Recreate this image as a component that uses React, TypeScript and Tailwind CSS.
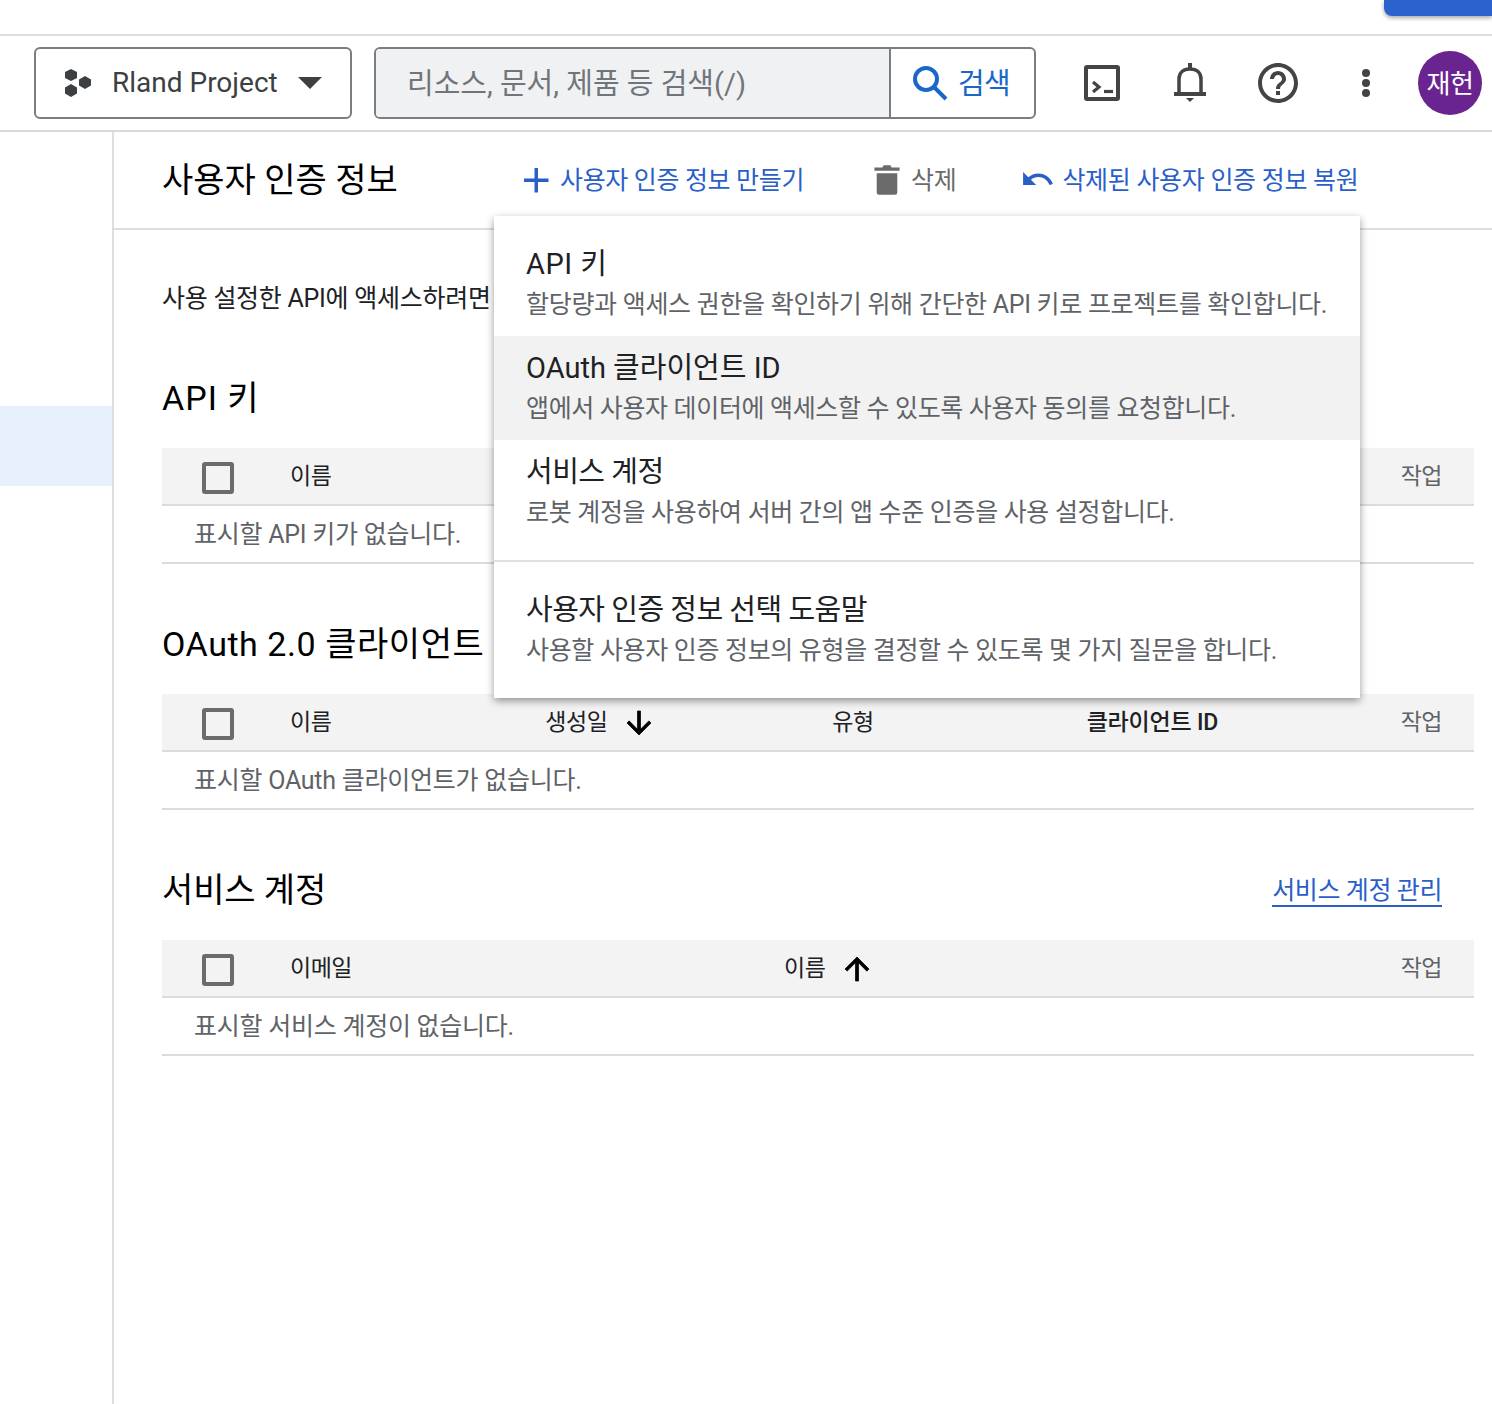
import React from 'react';

const font = { fontFamily: 'Roboto, "Noto Sans CJK KR", sans-serif' };

const Checkbox = () => (
  <div className="w-8 h-8 rounded-[3px] border-[4px] border-[#6b6b6b] shrink-0" />
);

const SortArrow = ({ up }: { up?: boolean }) => (
  <svg width="36" height="36" viewBox="0 0 24 24" className={up ? '' : 'rotate-180'}>
    <path d="M4 12l1.41 1.41L11 7.83V20h2V7.83l5.58 5.59L20 12l-8-8-8 8z" fill="#000" stroke="#000" strokeWidth="0.5" />
  </svg>
);

const menuItems = [
  { title: 'API 키', titleClass: 'tracking-[0.5px]', desc: '할당량과 액세스 권한을 확인하기 위해 간단한 API 키로 프로젝트를 확인합니다.', descClass: 'tracking-[-0.3px]' },
  { title: 'OAuth 클라이언트 ID', titleClass: 'tracking-[0px]', desc: '앱에서 사용자 데이터에 액세스할 수 있도록 사용자 동의를 요청합니다.', descClass: 'tracking-[-0.35px]', active: true },
  { title: '서비스 계정', titleClass: 'tracking-[-0.5px]', desc: '로봇 계정을 사용하여 서버 간의 앱 수준 인증을 사용 설정합니다.', descClass: 'tracking-[-0.33px]' },
];

const CreateMenu = () => (
  <div className="absolute left-[494px] top-[216px] w-[866px] h-[482px] bg-white shadow-[0_3px_8px_rgba(0,0,0,0.4)] z-10 pt-[16px]">
    {menuItems.map((m) => (
      <div key={m.title} className={`h-[104px] px-8 pt-[15px] ${m.active ? 'bg-[#f2f2f2]' : ''}`}>
        <div className={`text-[29px] leading-[34px] text-[#202124] ${m.titleClass}`}>{m.title}</div>
        <div className={`text-[25px] leading-[36px] mt-[6px] text-[#5f6368] whitespace-nowrap ${m.descClass}`}>{m.desc}</div>
      </div>
    ))}
    <div className="border-t-2 border-[#e0e0e0] mt-[16px] px-8 pt-[31px]">
      <div className="text-[29px] leading-[34px] text-[#202124] tracking-[-0.5px]">사용자 인증 정보 선택 도움말</div>
      <div className="text-[25px] leading-[36px] mt-[6px] text-[#5f6368] tracking-[-0.33px] whitespace-nowrap">사용할 사용자 인증 정보의 유형을 결정할 수 있도록 몇 가지 질문을 합니다.</div>
    </div>
  </div>
);

const Section = ({ title, titleClass, empty, columns, link, top }: { title: string; titleClass: string; empty: string; columns: React.ReactNode; link?: string; top: string }) => (
  <section className={top}>
    <div className="flex items-center justify-between h-[44px] pr-[32px]">
      <h2 className={`text-[34px] leading-[44px] text-[#000] ${titleClass}`}>{title}</h2>
      {link && <a className="mt-[4px] text-[25px] leading-[28px] text-[#2a5fc9] border-b-2 border-[#2a5fc9] tracking-[-0.4px]">{link}</a>}
    </div>
    <div className="mt-[28px] h-[58px] pt-[2px] bg-[#f3f3f3] border-b-2 border-[#dcdcdc] relative flex items-center text-[23px] text-[#202124] tracking-[-0.5px]">
      <div className="pl-[40px] w-[128px] shrink-0 pt-0.5"><Checkbox /></div>
      {columns}
      <span className="ml-auto pr-[32px] text-[#5f6368]">작업</span>
    </div>
    <div className="h-[58px] pt-[2px] border-b-2 border-[#dcdcdc] pl-[32px] flex items-center text-[25px] text-[#5f6368] tracking-[-0.25px]">{empty}</div>
  </section>
);

export default function App() {
  return (
    <div style={font} className="w-[1492px] h-[1404px] bg-white relative overflow-hidden">
      <div className="h-[36px] border-b-2 border-[#dedede] relative">
        <div className="absolute right-0 top-0 w-[108px] h-[16px] bg-[#2b62cc] rounded-bl-[8px] shadow-[0_2px_4px_rgba(0,0,0,0.35)]" />
      </div>

      <header className="h-[96px] border-b-2 border-[#d9d9de] flex items-center pl-[34px] pr-[10px]">
        <div className="w-[318px] h-[72px] rounded-[6px] border-2 border-[#7b7d82] flex items-center pl-[28px] pr-[28px]">
          <svg width="28" height="30" viewBox="0 0 28 30" fill="#3c4043" className="shrink-0">
            <path d="M7 1l6 3v6l-6 3-6-3V4z" />
            <path d="M21 8l6 3.5v6L21 21l-6-3.500v-6z" />
            <path d="M7 16l6 3.500v6L7 29l-6-3.500v-6z" />
          </svg>
          <span className="ml-[20px] text-[28px] text-[#3c4043] whitespace-nowrap">Rland Project</span>
          <svg width="24" height="12" viewBox="0 0 24 12" className="ml-auto"><path d="M0 0h24L12 12z" fill="#3c4043" /></svg>
        </div>

        <div className="ml-[22px] w-[662px] h-[72px] rounded-[6px] border-2 border-[#7b7d82] flex overflow-hidden">
          <div className="w-[515px] bg-[#f0f1f3] border-r-2 border-[#7b7d82] flex items-center pl-[31px] pt-1 text-[29px] text-[#70757a] whitespace-nowrap">
            리소스, 문서, 제품 등 검색(/)
          </div>
          <div className="flex-1 flex items-center pl-[20px] text-[#1a66c9] text-[29px]">
            <svg width="38" height="38" viewBox="0 0 38 38" fill="none" stroke="#1a66c9" strokeWidth="4" className="shrink-0">
              <circle cx="15" cy="15" r="11" />
              <path d="M23 23l12 12" />
            </svg>
            <span className="ml-[9px] mt-1 tracking-[-0.7px]">검색</span>
          </div>
        </div>

        <div className="ml-[48px] w-[36px] h-[36px] border-[4px] border-[#444] rounded-[3px] shrink-0">
          <svg width="28" height="28" viewBox="0 0 28 28" fill="none" stroke="#444" strokeWidth="3.2"><path d="M5 13l6 5-6 5" /><path d="M16 22.500h9" /></svg>
        </div>
        <svg width="32" height="40" viewBox="0 0 32 40" className="ml-[54px] shrink-0" fill="none" stroke="#444" strokeWidth="3.500">
          <path d="M5 30V16c0-6 4-10 11-10s11 4 11 10v14" />
          <path d="M0 31h32" strokeWidth="4" />
          <path d="M16 0v5" strokeWidth="4" />
          <path d="M12 35h8l-4 4z" fill="#444" stroke="none" />
        </svg>
        <svg width="48" height="48" viewBox="0 0 24 24" className="ml-[48px] shrink-0" fill="#444">
          <path d="M11 18h2v-2h-2v2zm1-16C6.480 2 2 6.480 2 12s4.480 10 10 10 10-4.480 10-10S17.520 2 12 2zm0 18c-4.410 0-8-3.590-8-8s3.590-8 8-8 8 3.590 8 8-3.590 8-8 8zm0-14c-2.210 0-4 1.790-4 4h2c0-1.100.9-2 2-2s2 .9 2 2c0 2-3 1.750-3 5h2c0-2.250 3-2.500 3-5 0-2.210-1.790-4-4-4z" />
        </svg>
        <div className="ml-[60px] flex flex-col gap-[2px] shrink-0">
          <span className="w-[8px] h-[8px] rounded-full bg-[#444]" />
          <span className="w-[8px] h-[8px] rounded-full bg-[#444]" />
          <span className="w-[8px] h-[8px] rounded-full bg-[#444]" />
        </div>
        <div className="ml-auto w-[64px] h-[64px] pt-[2px] rounded-full bg-[#6a2490] text-white text-[26px] flex items-center justify-center tracking-[-0.3px]">재헌</div>
      </header>

      <div className="flex h-[1272px]">
        <aside className="w-[114px] shrink-0 border-r-2 border-[#dedede] pt-[274px]">
          <div className="h-[80px] bg-[#e8f0fe]" />
        </aside>

        <main className="flex-1 min-w-0">
          <div className="h-[98px] border-b-2 border-[#dedede] flex items-center pl-[48px]">
            <h1 className="w-[360px] text-[34px] text-black whitespace-nowrap">사용자 인증 정보</h1>
            <div className="flex items-center text-[#2a5fc9] text-[25px] tracking-[-0.35px] whitespace-nowrap">
              <svg width="28" height="28" viewBox="0 0 28 28" fill="#2a5fc9"><path d="M12.500 2h3.500v10.500h10.500v3.500H16v10.500h-3.500V16H2v-3.500h10.500z" /></svg>
              <span className="ml-[10px] mt-[2px]">사용자 인증 정보 만들기</span>
            </div>
            <div className="ml-[69px] flex items-center text-[#6b6b6b] text-[25px] tracking-[-0.35px]">
              <svg width="28" height="32" viewBox="0 0 24 28" fill="#6b6b6b"><path d="M3 8h18v17a2 2 0 0 1-2 2H5a2 2 0 0 1-2-2zM1 3h7l1-2h6l1 2h7v3H1z" /></svg>
              <span className="ml-[10px] mt-[2px]">삭제</span>
            </div>
            <div className="ml-[67px] flex items-center text-[#2a5fc9] text-[25px] tracking-[-0.3px] whitespace-nowrap">
              <svg width="30" height="16" viewBox="2 7 20.500 11" fill="#2a5fc9"><path d="M12.500 8c-2.650 0-5.050.99-6.900 2.600L2 7v9h9l-3.620-3.620c1.390-1.160 3.160-1.880 5.120-1.880 3.540 0 6.550 2.310 7.600 5.500l2.370-.78C21.080 11.030 17.150 8 12.500 8z" /></svg>
              <span className="ml-[9px] mt-[2px]">삭제된 사용자 인증 정보 복원</span>
            </div>
          </div>

          <div className="pl-[48px] pr-[18px]">
            <p className="mt-[51px] h-[36px] text-[25px] leading-[36px] text-[#202124] tracking-[-0.27px] whitespace-nowrap">사용 설정한 API에 액세스하려면</p>
            <Section
              top="mt-[59px]"
              title="API 키"
              titleClass="tracking-[1px]"
              empty="표시할 API 키가 없습니다."
              columns={<span>이름</span>}
            />
            <Section
              top="mt-[58px]"
              title="OAuth 2.0 클라이언트"
              titleClass="tracking-[0.55px]"
              empty="표시할 OAuth 클라이언트가 없습니다."
              columns={
                <>
                  <span>이름</span>
                  <span className="ml-[214px]">생성일</span>
                  <span className="ml-[14px]"><SortArrow /></span>
                  <span className="ml-[175px]">유형</span>
                  <span className="ml-[213px] font-medium tracking-[-0.2px]">클라이언트 ID</span>
                </>
              }
            />
            <Section
              top="mt-[58px]"
              title="서비스 계정"
              titleClass="tracking-[-0.1px]"
              link="서비스 계정 관리"
              empty="표시할 서비스 계정이 없습니다."
              columns={
                <>
                  <span>이메일</span>
                  <span className="ml-[432px]">이름</span>
                  <span className="ml-[14px]"><SortArrow up /></span>
                </>
              }
            />
          </div>
        </main>
      </div>

      <CreateMenu />
    </div>
  );
}
